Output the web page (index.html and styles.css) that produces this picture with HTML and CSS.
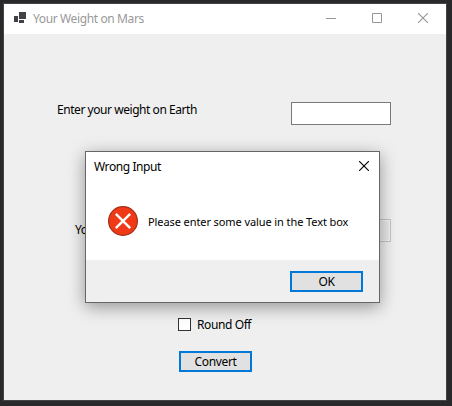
FILE: index.html
```html
<!DOCTYPE html>
<html lang="en">
<head>
<meta charset="utf-8">
<title>Your Weight on Mars</title>
<link rel="stylesheet" href="styles.css">
</head>
<body>
<main class="window">
  <header class="titlebar">
    <svg class="app-icon" width="12" height="11" viewBox="0 0 12 11" shape-rendering="crispEdges"><path fill="#424246" d="M5 0h7v7H5zM0 4h4v6H0zM5 8h5v3H5z"/></svg>
    <span class="window-title">Your Weight on Mars</span>
    <div class="controls">
      <svg width="10" height="10" viewBox="0 0 10 10"><path stroke="#969696" d="M0 5.5h10"/></svg>
      <svg width="10" height="10" viewBox="0 0 10 10"><path fill="none" stroke="#969696" d="M.5.5h9v9h-9z"/></svg>
      <svg width="10" height="10" viewBox="0 0 10 10"><path fill="none" stroke="#969696" stroke-width="1.1" d="M0 0l10 10M10 0L0 10"/></svg>
    </div>
  </header>
  <section class="form">
    <div class="row">
      <span class="label earth">Enter your weight on Earth</span>
      <span class="field"></span>
    </div>
    <div class="row result">
      <span class="label mars">Yo</span>
      <span class="field readonly"></span>
    </div>
    <div class="check"><span class="box"></span><span class="check-text">Round Off</span></div>
    <div class="button convert"><span class="button-text">Convert</span></div>
  </section>
</main>
<div class="dialog">
  <div class="dialog-title">
    <span class="dialog-name">Wrong Input</span>
    <svg width="10" height="10" viewBox="0 0 10 10"><path fill="none" stroke="#000" stroke-width="1.1" d="M0 0l10 10M10 0L0 10"/></svg>
  </div>
  <div class="dialog-body">
    <svg width="30" height="30" viewBox="0 0 30 30"><circle cx="15" cy="15" r="14.4" fill="#f03a17" stroke="#a5301a" stroke-width="1.2"/><path stroke="#fff" stroke-width="2.4" d="M7.8 7.8l14.4 14.4M22.2 7.8L7.8 22.2"/></svg>
    <span class="message">Please enter some value in the Text box</span>
  </div>
  <div class="dialog-footer"><div class="button"><span class="button-text">OK</span></div></div>
</div>
</body>
</html>
```
FILE: styles.css
```css
* { box-sizing: border-box; }
body {
  margin: 0;
  width: 452px;
  height: 406px;
  padding: 3px 5px 5px 3px;
  overflow: hidden;
  background: #29292b;
  font: 12px/16px "Noto Sans", "Open Sans", sans-serif;
  color: #000;
  white-space: nowrap;
}
svg { display: block; flex: none; }
.window {
  width: 444px;
  height: 398px;
  border: 1px solid #434446;
  background: #efefef;
}
.titlebar {
  display: flex;
  align-items: flex-start;
  height: 30px;
  padding: 8px 18px 0 10px;
  background: #fff;
}
.window-title { margin: -1px 0 0 7px; color: #999; letter-spacing: -0.38px; }
.controls { display: flex; gap: 36px; margin: 1px 0 0 auto; }
.form { padding-top: 68px; }
.row { display: flex; height: 23px; padding-right: 55px; }
.result { margin-top: 94px; }
.label { letter-spacing: -0.45px; }
.earth { margin-left: 53px; }
.mars { margin: 3px 0 0 71px; }
.field { width: 100px; height: 23px; margin-left: auto; border: 1px solid #7a7a7a; background: #fff; }
.readonly { border-color: #c4c4c4; background: #e9e9e9; box-shadow: inset 0 0 0 1px #f2f2f2; }
.check { display: flex; margin: 76px 0 0 174px; height: 13px; }
.box { width: 13px; height: 13px; border: 1px solid #333; background: #fff; }
.check-text { margin: -1px 0 0 6px; letter-spacing: -0.4px; }
.button {
  display: flex;
  justify-content: center;
  width: 73px;
  height: 21px;
  border: 2px solid #0078d7;
  background: #e1e1e1;
}
.button-text { margin-top: 1px; letter-spacing: -0.35px; }
.convert { margin: 20px 0 0 175px; }
.dialog {
  position: absolute;
  left: 85px;
  top: 151px;
  width: 295px;
  height: 152px;
  border: 1px solid #666;
  background: #fff;
  box-shadow: 0 4px 16px rgba(0, 0, 0, .38);
}
.dialog-title { display: flex; justify-content: space-between; height: 54px; padding: 9px 10px 0 8px; }
.dialog-name { margin-top: -2px; letter-spacing: -0.42px; }
.dialog-body { display: flex; height: 54px; padding-left: 22px; }
.message { margin: 8px 0 0 10px; font-size: 11px; letter-spacing: -0.09px; }
.dialog-footer {
  display: flex;
  justify-content: flex-end;
  height: 42px;
  padding: 11px 16px 0 0;
  background: #efefef;
}
```
